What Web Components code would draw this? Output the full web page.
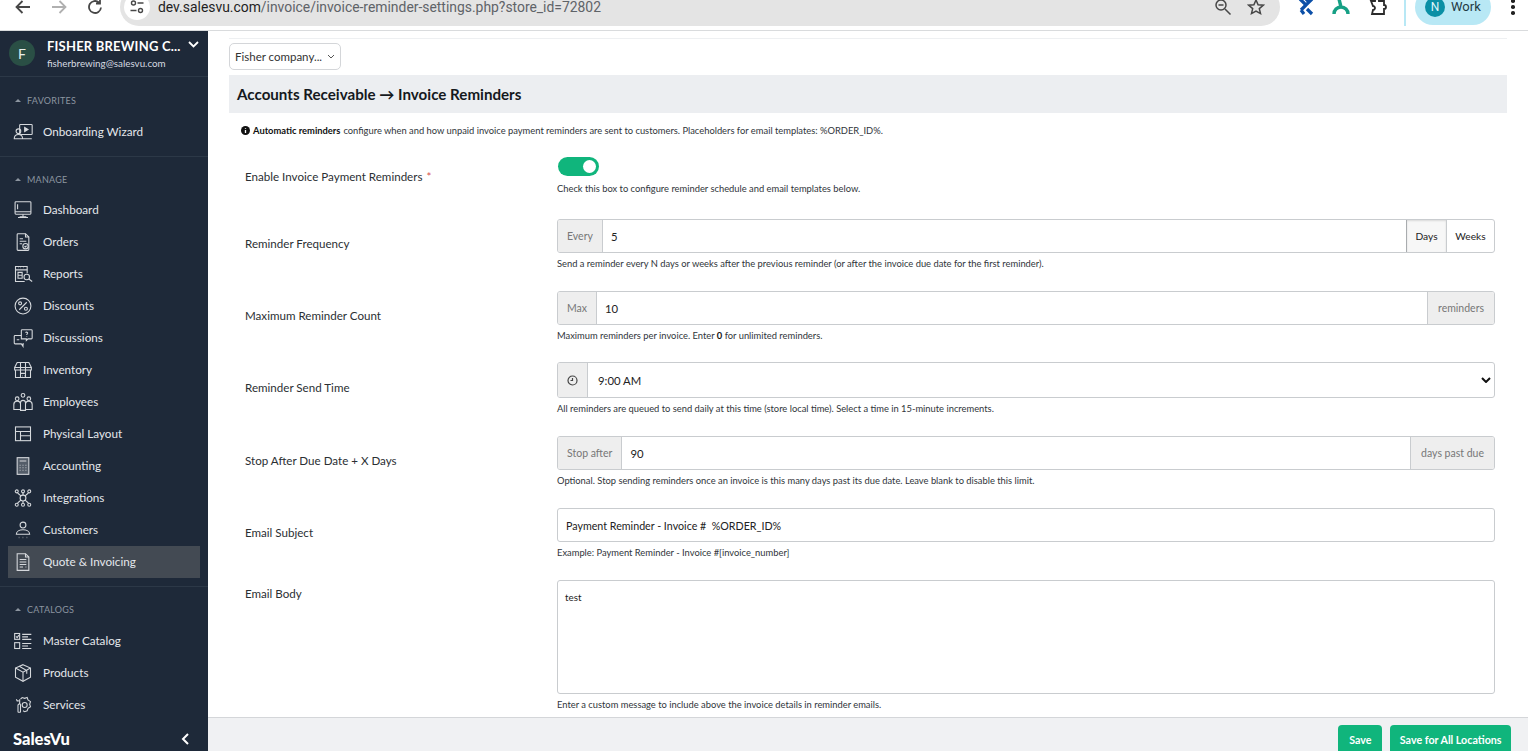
<!DOCTYPE html>
<html lang="en">
<head>
<meta charset="utf-8">
<title>Invoice Reminders</title>
<style>
  html, body { margin: 0; height: 100%; overflow: hidden; background: #fff; }
  body { font-family: Lato, "Open Sans", sans-serif; }
  app-shell { height: 751px; }
</style>
</head>
<body>
<app-shell>
  <browser-bar slot="top"></browser-bar>
  <side-nav slot="side"></side-nav>
  <settings-page></settings-page>
</app-shell>

<script>
const ICONS = {
  wizard: '<rect x="8" y="3" width="15" height="12" rx="1"/><path d="M14 6.500v5l4-2.500z" fill="currentColor"/><circle cx="6.500" cy="11" r="2.800"/><path d="M1.500 20c0-3 2-5 5-5s5 2 5 5zM1.500 20h21"/>',
  dashboard: '<rect x="2.500" y="2" width="19" height="15" rx="1"/><path d="M2.500 14h19M5.500 5v6M12 17v3M6 21h12M8 20h8"/>',
  orders: '<path d="M6 2h9l4 4v15a1 1 0 0 1-1 1H6a1 1 0 0 1-1-1V3a1 1 0 0 1 1-1z"/><path d="M15 2v4h4M8 8h4M8 11h8M8 14h3"/><circle cx="15" cy="17" r="3.200"/><path d="M13.800 17l1 1 1.500-1.500"/>',
  reports: '<path d="M17 11V3H3v18h11"/><path d="M3 7h14M6 4.500h.5M9 4.500h.5M12 4.500h.5M6 10h5v7H6zM6 13.500h5"/><circle cx="16.500" cy="15.500" r="3.300"/><path d="M19 18l4 3"/>',
  discounts: '<circle cx="12" cy="12" r="9.500"/><path d="M16.500 7.500l-9 9"/><circle cx="8.500" cy="8.800" r="1.800"/><circle cx="15.500" cy="15.200" r="1.800"/>',
  discussions: '<path d="M10 9H2.500a1 1 0 0 0-1 1v8a1 1 0 0 0 1 1H10l2 3v-3h1"/><path d="M10 3a1 1 0 0 1 1-1h11a1 1 0 0 1 1 1v9a1 1 0 0 1-1 1h-4l-2 2v-2h-6z"/><path d="M15 5.500c1-1 3-.5 2.500 1-.3.8-1 .8-1 2M16.500 10v.5M4.500 14h3"/>',
  inventory: '<path d="M5 3h14l3 6v3H2V9z"/><path d="M3 12v9h18v-9M2 9h20M9 3v18M15 3v18M9 16h6M11 19h.5M13.500 19h.5"/>',
  employees: '<circle cx="12" cy="4" r="2.200"/><circle cx="5" cy="8" r="2.200"/><circle cx="19" cy="8" r="2.200"/><path d="M9 22v-9c0-4 6-4 6 0v9zM9 14c-1-4.500-8-4-8 1v6h8M15 14c1-4.500 8-4 8 1v6h-8"/>',
  layout: '<rect x="3" y="3.500" width="18" height="16.500"/><path d="M3 9h18M9 9v11M9 14h12"/>',
  accounting: '<rect x="5" y="2" width="14" height="20" fill="currentColor" fill-opacity=".3"/><path d="M8 6h8M8 11h1M11.500 11h1M15 11h1M8 14h1M11.500 14h1M15 14h1M8 17h1M11.500 17h1M15 17h1"/>',
  integrations: '<circle cx="12" cy="12" r="3.500"/><circle cx="4.500" cy="4" r="1.800"/><circle cx="12" cy="4" r="1.800"/><circle cx="19.500" cy="4" r="1.800"/><circle cx="4.500" cy="20" r="1.800"/><circle cx="12" cy="20" r="1.800"/><circle cx="19.500" cy="20" r="1.800"/><path d="M12 6v2.500M12 15.500V18M5.500 6l4 3.500M18.500 6l-4 3.500M5.500 18l4-3.500M18.500 18l-4-3.500"/>',
  customers: '<circle cx="12" cy="6" r="3.500"/><path d="M4 17c0-7 16-7 16 0z"/><path d="M7 21h.5M11.700 21h.5M16.500 21h.5" stroke-width="2"/>',
  invoicing: '<path d="M5 2h10l4 4v16H5z"/><path d="M15 2v4h4M8 9h8M8 12h8M8 15h8M8 18h4M15 18h1"/>',
  catalog: '<rect x="2" y="3" width="6" height="7"/><path d="M3.500 6.500l1.500 1.500 2-3"/><rect x="2" y="14" width="6" height="7"/><path d="M11 4h11M11 7h7M11 10h11M11 15h11M11 18h7M11 21h11"/>',
  products: '<path d="M12 2l9 4v11l-9 5-9-5V6z"/><path d="M3 6l9 5 9-5M12 11v11M7.500 4l9 5v4"/>',
  services: '<path d="M9 5l2-2 3 1 3-1 1 3 3 2-1 3 1 3-3 2-1 3-3 1-2-1"/><path d="M8 5v5l-2 2v8c0 1 3 1 3 0v-8L8 10M4 5l1 2h2"/><circle cx="14" cy="12" r="3"/>'
};

class AppShell extends HTMLElement {
  constructor() {
    super();
    this.attachShadow({ mode: "open" });
  }

  connectedCallback() {
    this.shadowRoot.innerHTML = `
    <style>
      :host { display: flex; flex-direction: column; }
      .body { flex: 1; min-height: 0; display: flex; }
    </style>
    <slot name="top"></slot>
    <div class="body">
      <slot name="side"></slot>
      <slot></slot>
    </div>
    `;
  }
}

class BrowserBar extends HTMLElement {
  constructor() {
    super();
    this.attachShadow({ mode: "open" });
  }

  connectedCallback() {
    this.shadowRoot.innerHTML = `
    <style>
      :host { display: block; height: 30px; overflow: hidden; background: #fff; border-bottom: 1px solid #d9dbdd; }
      .row { display: flex; align-items: center; height: 38px; margin-top: -12px; color: #474747; }
      svg { display: block; fill: none; stroke: currentColor; flex: none; }
      .nav { margin-left: 14px; }
      .fwd { margin-left: 18px; color: #b0b0b0; }
      .reload { margin-left: 18px; }
      .omni { flex: none; width: 1160px; height: 38px; margin-left: 16px; background: #e4e4e4; border-radius: 19px; display: flex; align-items: center; box-sizing: border-box; }
      .tune { width: 26px; height: 26px; border-radius: 50%; background: #fff; margin-left: 4px; display: flex; align-items: center; justify-content: center; }
      .url { margin-left: 8px; font: 13.900px/14px Roboto, sans-serif; color: #5f6368; white-space: nowrap; flex: 1; }
      .url b { font-weight: 400; color: #1f1f1f; }
      .zoom { margin-right: 15px; }
      .star { margin-right: 15px; }
      .ext1 { margin-left: 18px; }
      .ext2 { margin-left: 18px; }
      .ext3 { margin-left: 19px; }
      .sep { width: 2px; height: 38px; background: #b8e8f5; margin-left: 17px; }
      .pill { width: 76px; height: 36px; margin-left: 9px; border-radius: 18px; background: #b8e8f5; display: flex; align-items: center; box-sizing: border-box; padding-left: 10px; font: 13px/14px Roboto, sans-serif; color: #1f3a44; }
      .pill i { font-style: normal; width: 20px; height: 20px; border-radius: 50%; background: #0a8fa5; color: #dff6fb; display: flex; align-items: center; justify-content: center; font-size: 12px; margin-right: 6px; }
      .dots { margin-left: 20px; display: flex; flex-direction: column; gap: 2.500px; }
      .dots i { width: 3.500px; height: 3.500px; border-radius: 50%; background: #222; }
    </style>
    <div class="row">
      <svg class="nav" width="18" height="18" viewBox="0 0 18 18" stroke-width="1.800"><path d="M16 9H3M8.500 3L2.500 9l6 6"/></svg>
      <svg class="fwd" width="18" height="18" viewBox="0 0 18 18" stroke-width="1.800"><path d="M2 9h13M9.500 3l6 6-6 6"/></svg>
      <svg class="reload" width="18" height="18" viewBox="0 0 18 18" stroke-width="1.800"><path d="M15 9.500A6 6 0 1 1 13 4.500M14 1.500v4h-4"/></svg>
      <div class="omni">
        <div class="tune">
          <svg width="16" height="16" viewBox="0 0 16 16" stroke-width="1.400"><circle cx="4.500" cy="4" r="2"/><path d="M8.500 4h6M1.500 11.500h6"/><circle cx="11.500" cy="11.500" r="2"/></svg>
        </div>
        <div class="url"><b>dev.salesvu.com</b>/invoice/invoice-reminder-settings.php?store_id=72802</div>
        <svg class="zoom" width="18" height="18" viewBox="0 0 18 18" stroke-width="1.500"><circle cx="7" cy="7" r="5"/><path d="M4.500 7h5M11 11l5.500 5.500"/></svg>
        <svg class="star" width="18" height="18" viewBox="0 0 18 18" stroke-width="1.500"><path d="M9 2l2.100 4.700 5.100.5-3.900 3.400 1.200 5L9 13l-4.500 2.600 1.200-5-3.900-3.400 5.100-.5z"/></svg>
      </div>
      <svg class="ext1" width="16" height="18" viewBox="0 0 16 18" style="color:#0b4fa8" stroke-width="3.200"><path d="M2 1l6 6 6-6M8 7L3 12M9 11l5 5M3 12l3 4M10 3l-3-3"/></svg>
      <svg class="ext2" width="18" height="18" viewBox="0 0 18 18" style="color:#16a085" stroke-width="3.400"><path d="M2 16c0-4 3-7 7-7s7 3 7 7M9 9L7 1"/></svg>
      <svg class="ext3" width="18" height="18" viewBox="0 0 18 18" style="color:#2b2b2b" stroke-width="1.800"><path d="M2 3h4a2 2 0 0 1 4 0h5v4a2 2 0 0 1 0 4v5H3l1-4a2 2 0 0 0 0-4z"/></svg>
      <div class="sep"></div>
      <div class="pill"><i>N</i>Work</div>
      <div class="dots"><i></i><i></i><i></i></div>
    </div>
    `;
  }
}

class NavItem extends HTMLElement {
  constructor() {
    super();
    this.attachShadow({ mode: "open" });
  }

  connectedCallback() {
    const icon = this.getAttribute("icon");
    const active = this.hasAttribute("active");
    this.shadowRoot.innerHTML = `
    <style>
      :host { display: block; }
      .item { display: flex; align-items: center; height: 32px; margin: 0 8px; padding-left: 5px; background: ${active ? "#434a53" : "transparent"}; font-size: 11.700px; color: #e4e7eb; }
      span { padding-bottom: 2px; }
      svg { width: 20px; height: 20px; margin-right: 10px; fill: none; stroke: currentColor; stroke-width: 1.300; flex: none; color: #d5d8dc; }
    </style>
    <div class="item">
      <svg viewBox="0 0 24 24">${ICONS[icon]}</svg>
      <span><slot></slot></span>
    </div>
    `;
  }
}

class NavSection extends HTMLElement {
  constructor() {
    super();
    this.attachShadow({ mode: "open" });
  }

  connectedCallback() {
    const title = this.getAttribute("title");
    this.shadowRoot.innerHTML = `
    <style>
      :host { display: block; border-bottom: 1px solid #2c3847; padding: var(--top, 15px) 0 8px; }
      :host([last]) { border-bottom: 0; }
      .head { display: flex; align-items: center; height: 14px; margin: 0 0 var(--head-gap, 8px) 15px; font-size: 9px; letter-spacing: .25px; color: #8c95a0; }
      .head i { width: 0; height: 0; border: 3px solid transparent; border-top: 0; border-bottom: 3px solid #8c95a0; margin-right: 6px; }
    </style>
    <div class="head"><i></i>${title}</div>
    <slot></slot>
    `;
  }
}

class SideNav extends HTMLElement {
  constructor() {
    super();
    this.attachShadow({ mode: "open" });
  }

  connectedCallback() {
    this.shadowRoot.innerHTML = `
    <style>
      :host { display: flex; flex-direction: column; width: 208px; flex: none; background: #1e2939; overflow: hidden; }
      .account { display: flex; align-items: flex-start; height: 46px; box-sizing: border-box; padding: 8px 9px 0 9px; border-bottom: 1px solid #2c3847; color: #fff; flex: none; }
      .avatar { width: 26px; height: 26px; border-radius: 50%; background: #2a4f45; color: #e8efec; display: flex; align-items: center; justify-content: center; font-size: 14px; font-weight: 400; margin-right: 12px; margin-top: 1px; flex: none; }
      .name { font-size: 13px; font-weight: 700; letter-spacing: .2px; white-space: nowrap; line-height: 13px; margin-top: 1px; }
      .mail { font-size: 9.800px; color: #d6dae0; margin-top: 4px; }
      .chev { margin-left: auto; margin-top: 2px; flex: none; }
      .list { flex: 1; min-height: 0; overflow: hidden; }
      .foot { flex: none; height: 22px; display: flex; align-items: center; justify-content: space-between; padding: 0 19px 2px 13px; box-sizing: border-box; color: #fff; font-size: 16.500px; font-weight: 900; }
      svg { fill: none; stroke: #fff; display: block; }
    </style>
    <div class="account">
      <div class="avatar">F</div>
      <div>
        <div class="name">FISHER BREWING C...</div>
        <div class="mail">fisherbrewing@salesvu.com</div>
      </div>
      <svg class="chev" width="11" height="7" viewBox="0 0 11 7" stroke-width="1.800"><path d="M1 1l4.500 4.500L10 1"/></svg>
    </div>
    <div class="list">
      <nav-section title="FAVORITES" style="--top:16px;--head-gap:9px">
        <nav-item icon="wizard">Onboarding Wizard</nav-item>
      </nav-section>
      <nav-section title="MANAGE">
        <nav-item icon="dashboard">Dashboard</nav-item>
        <nav-item icon="orders">Orders</nav-item>
        <nav-item icon="reports">Reports</nav-item>
        <nav-item icon="discounts">Discounts</nav-item>
        <nav-item icon="discussions">Discussions</nav-item>
        <nav-item icon="inventory">Inventory</nav-item>
        <nav-item icon="employees">Employees</nav-item>
        <nav-item icon="layout">Physical Layout</nav-item>
        <nav-item icon="accounting">Accounting</nav-item>
        <nav-item icon="integrations">Integrations</nav-item>
        <nav-item icon="customers">Customers</nav-item>
        <nav-item icon="invoicing" active>Quote &amp; Invoicing</nav-item>
      </nav-section>
      <nav-section title="CATALOGS" last style="--head-gap:9px">
        <nav-item icon="catalog">Master Catalog</nav-item>
        <nav-item icon="products">Products</nav-item>
        <nav-item icon="services">Services</nav-item>
      </nav-section>
    </div>
    <div class="foot">
      <span>SalesVu</span>
      <svg width="8" height="12" viewBox="0 0 8 12" stroke-width="2"><path d="M7 1L2 6l5 5"/></svg>
    </div>
    `;
  }
}

class FormRow extends HTMLElement {
  constructor() {
    super();
    this.attachShadow({ mode: "open" });
  }

  connectedCallback() {
    const label = this.getAttribute("label");
    const help = this.getAttribute("help") || "";
    this.shadowRoot.innerHTML = `
    <style>
      :host { display: grid; grid-template-columns: 312px 938px; padding-left: 16px; }
      .label { font-size: 11.600px; color: #2b2f33; display: flex; align-items: var(--label-align, center); padding: var(--label-pad, 0) 0 var(--label-pb, 2px); }
      .req { color: #d9534f; margin-left: 4px; }
      .help { font-size: 9.350px; color: #30353a; margin-top: var(--help-gap, 4px); line-height: 13px; white-space: nowrap; }
      .help b { color: #111; }
    </style>
    <div class="label"><span>${label}${this.hasAttribute("required") ? '<span class="req">*</span>' : ""}</span></div>
    <div>
      <slot></slot>
      <div class="help">${help}</div>
    </div>
    `;
  }
}

class InputGroup extends HTMLElement {
  constructor() {
    super();
    this.attachShadow({ mode: "open" });
  }

  connectedCallback() {
    const before = this.getAttribute("before");
    const after = this.getAttribute("after");
    const value = this.getAttribute("value") || "";
    const height = this.getAttribute("height") || "34";
    this.shadowRoot.innerHTML = `
    <style>
      :host { display: flex; height: ${height}px; box-sizing: border-box; border: 1px solid #c9cccf; border-radius: 3px; overflow: hidden; background: #fff; font-size: 10.500px; color: #222; }
      .addon { display: flex; align-items: center; padding: 0 9px; background: #eeeeee; color: #777; white-space: nowrap; }
      .addon.before { border-right: 1px solid #c9cccf; }
      .addon.after { padding: 0 10px; border-left: 1px solid #c9cccf; }
      .value { flex: 1; display: flex; align-items: center; padding-left: var(--value-pad, 8px); font-size: var(--value-size, 11.300px); }
      ::slotted(*) { flex: none; }
    </style>
    ${before ? `<div class="addon before">${before}</div>` : ""}
    <slot name="before"></slot>
    <div class="value">${value}</div>
    <slot></slot>
    ${after ? `<div class="addon after">${after}</div>` : ""}
    `;
  }
}

class UnitSwitch extends HTMLElement {
  constructor() {
    super();
    this.attachShadow({ mode: "open" });
  }

  connectedCallback() {
    this.shadowRoot.innerHTML = `
    <style>
      :host { display: flex; font-size: 10.200px; color: #222; }
      div { display: flex; align-items: center; border-left: 1px solid #c9cccf; }
      .on { width: 39px; justify-content: center; background: #f7f7f7; border-left-color: #a9acaf; box-shadow: inset 0 1px 2px rgba(0,0,0,.12); }
      .off { width: 47px; justify-content: center; }
    </style>
    <div class="on">Days</div>
    <div class="off">Weeks</div>
    `;
  }
}

class ToggleSwitch extends HTMLElement {
  constructor() {
    super();
    this.attachShadow({ mode: "open" });
  }

  connectedCallback() {
    this.shadowRoot.innerHTML = `
    <style>
      :host { display: block; width: 41px; height: 19px; border-radius: 10px; background: #10b57c; margin-left: 1px; overflow: hidden; }
      div { width: 13px; height: 13px; border-radius: 50%; background: #fff; margin: 3px 0 0 25px; }
    </style>
    <div></div>
    `;
  }
}

class SettingsPage extends HTMLElement {
  constructor() {
    super();
    this.attachShadow({ mode: "open" });
  }

  connectedCallback() {
    this.shadowRoot.innerHTML = `
    <style>
      :host { display: flex; flex-direction: column; flex: 1; min-width: 0; background: #fff; color: #222; }
      .scroll { flex: 1; min-height: 0; overflow: hidden; padding: 7px 21px 0; }
      .rule { height: 1px; background: #eef0f2; }
      .picker { display: flex; align-items: center; width: 112px; height: 27px; box-sizing: border-box; margin-top: 4px; padding-left: 5px; border: 1px solid #d4d6d9; border-radius: 5px; font-size: 11.500px; color: #333; white-space: nowrap; }
      .picker svg { margin-left: 5px; }
      h1 { margin: 5px 0 0; height: 38px; display: flex; align-items: center; background: #eceef1; padding-left: 8px; font-size: 15.150px; font-weight: 700; color: #15191d; }
      .info { display: flex; align-items: center; margin: 11px 0 0 12px; height: 13px; font-size: 9.360px; color: #30353a; white-space: nowrap; }
      .info svg { margin-right: 3px; }
      .info b { color: #111; margin-right: 3px; }
      form-row { margin-top: 21px; }
      .r0 { margin-top: 20px; --label-pad: 0px; --label-pb: 0px; --help-gap: 6px; }
      .r1 { margin-top: 24px; }
      .r3 { margin-top: 20px; }
      .body-row { --label-align: flex-start; --label-pad: 7px; }
      .clock { display: flex; align-items: center; justify-content: center; width: 29px; background: #eee; border-right: 1px solid #c9cccf; }
      .arrow { display: flex; align-items: center; padding-right: 3px; }
      .time { --value-pad: 10px; }
      .subject { --value-size: 10.700px; }
      .area { display: block; height: 114px; box-sizing: border-box; border: 1px solid #c9cccf; border-radius: 3px; padding: 10px 7px; font-size: 9.800px; color: #222; }
      .foot { flex: none; height: 34px; box-sizing: border-box; display: flex; justify-content: flex-end; gap: 8px; padding: 7px 17px 0 0; background: #f0f1f3; border-top: 1px solid #d4d6d9; overflow: hidden; }
      .btn { height: 30px; box-sizing: border-box; display: flex; align-items: center; padding: 0 9.500px 2px; background: #10b57c; color: #fff; font-size: 10.700px; font-weight: 700; border-radius: 4px; }
      .btn.save { width: 44px; justify-content: center; padding: 0 0 2px; }
      svg { display: block; flex: none; }
    </style>
    <div class="scroll">
      <div class="rule"></div>
      <div class="picker">Fisher company...
        <svg width="8" height="5" viewBox="0 0 8 5" fill="none" stroke="#555"><path d="M1 1l3 3 3-3"/></svg>
      </div>
      <h1>Accounts Receivable → Invoice Reminders</h1>
      <div class="info">
        <svg width="9" height="9" viewBox="0 0 9 9"><circle cx="4.500" cy="4.500" r="4.500" fill="#111"/><path d="M4.500 2v.8M4.500 4v3" stroke="#fff" stroke-width="1.300"/></svg>
        <b>Automatic reminders</b> configure when and how unpaid invoice payment reminders are sent to customers. Placeholders for email templates: %ORDER_ID%.
      </div>
      <form-row class="r0" label="Enable Invoice Payment Reminders" required help="Check this box to configure reminder schedule and email templates below.">
        <toggle-switch></toggle-switch>
      </form-row>
      <form-row class="r1" label="Reminder Frequency" help="Send a reminder every N days or weeks after the previous reminder (or after the invoice due date for the first reminder).">
        <input-group before="Every" value="5"><unit-switch></unit-switch></input-group>
      </form-row>
      <form-row label="Maximum Reminder Count" help="Maximum reminders per invoice. Enter <b>0</b> for unlimited reminders.">
        <input-group before="Max" value="10" after="reminders"></input-group>
      </form-row>
      <form-row class="r3" label="Reminder Send Time" help="All reminders are queued to send daily at this time (store local time). Select a time in 15-minute increments.">
        <input-group class="time" height="36" value="9:00 AM">
          <div class="clock" slot="before"><svg width="11" height="11" viewBox="0 0 11 11" fill="none" stroke="#444" stroke-width="1.200"><circle cx="5.500" cy="5.500" r="4.500"/><path d="M5.500 3v2.500H3.500"/></svg></div>
          <div class="arrow"><svg width="10" height="6" viewBox="0 0 10 6" fill="none" stroke="#111" stroke-width="2"><path d="M1 1l4 4 4-4"/></svg></div>
        </input-group>
      </form-row>
      <form-row label="Stop After Due Date + X Days" help="Optional. Stop sending reminders once an invoice is this many days past its due date. Leave blank to disable this limit.">
        <input-group before="Stop after" value="90" after="days past due"></input-group>
      </form-row>
      <form-row label="Email Subject" help="Example: Payment Reminder - Invoice #[invoice_number]">
        <input-group class="subject" value="Payment Reminder - Invoice #&nbsp; %ORDER_ID%"></input-group>
      </form-row>
      <form-row class="body-row" label="Email Body" help="Enter a custom message to include above the invoice details in reminder emails.">
        <div class="area">test</div>
      </form-row>
    </div>
    <div class="foot">
      <div class="btn save">Save</div>
      <div class="btn">Save for All Locations</div>
    </div>
    `;
  }
}

window.customElements.define("app-shell", AppShell);
window.customElements.define("browser-bar", BrowserBar);
window.customElements.define("nav-item", NavItem);
window.customElements.define("nav-section", NavSection);
window.customElements.define("side-nav", SideNav);
window.customElements.define("form-row", FormRow);
window.customElements.define("input-group", InputGroup);
window.customElements.define("unit-switch", UnitSwitch);
window.customElements.define("toggle-switch", ToggleSwitch);
window.customElements.define("settings-page", SettingsPage);
</script>
</body>
</html>
